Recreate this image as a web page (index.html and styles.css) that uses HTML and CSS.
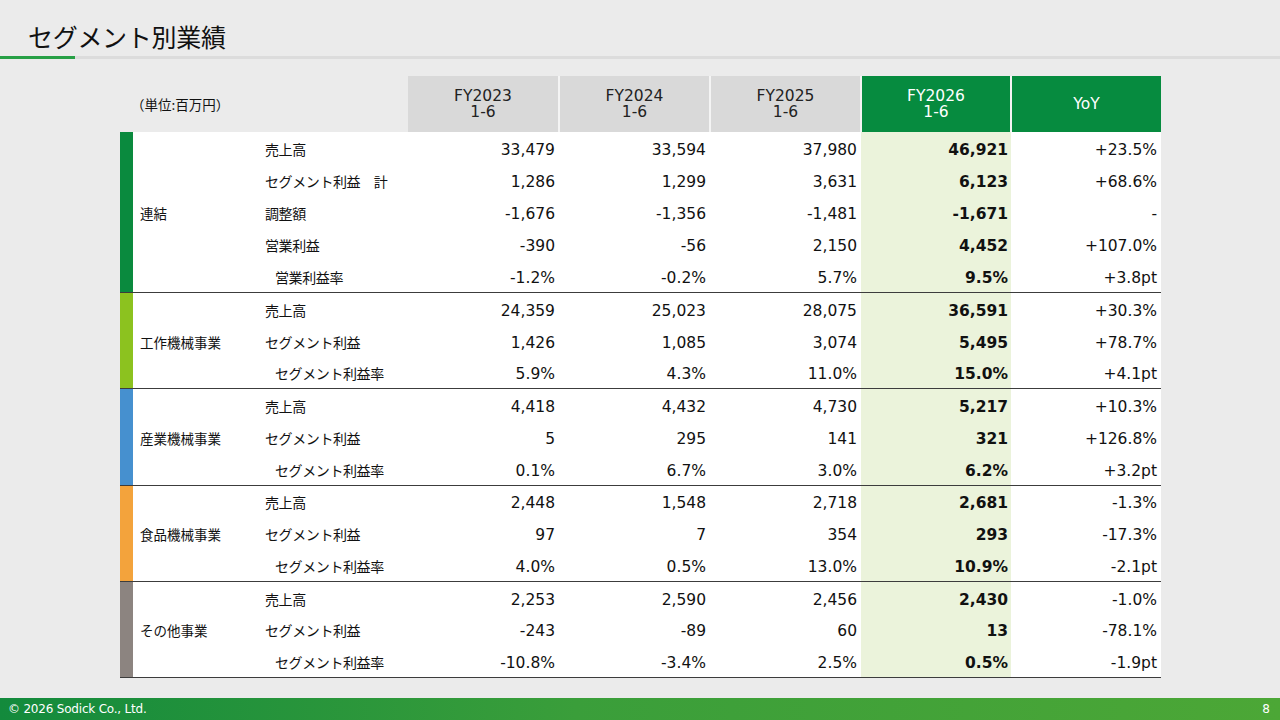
FILE: index.html
```html
<!DOCTYPE html>
<html lang="ja">
<head>
<meta charset="utf-8">
<title>セグメント別業績</title>
<link rel="stylesheet" href="styles.css">
</head>
<body>
<div class="slide">
  <header class="title-bar">
    <h1 class="title">セグメント別業績</h1>
    <div class="rule"><span class="rule-accent"></span></div>
  </header>

  <main class="content">
    <table class="seg">
      <colgroup>
        <col class="c-bar"><col class="c-group"><col class="c-item">
        <col class="c-num"><col class="c-num"><col class="c-num"><col class="c-cur"><col class="c-yoy">
      </colgroup>
      <thead>
        <tr>
          <th class="unit" colspan="3">（単位:百万円）</th>
          <th class="h-past">FY2023<br>1-6</th>
          <th class="h-past">FY2024<br>1-6</th>
          <th class="h-past">FY2025<br>1-6</th>
          <th class="h-cur">FY2026<br>1-6</th>
          <th class="h-cur">YoY</th>
        </tr>
      </thead>
      <tbody class="g g-consol">
        <tr><td class="bar" rowspan="5"></td><td class="grp" rowspan="5">連結</td><td class="item">売上高</td><td>33,479</td><td>33,594</td><td>37,980</td><td class="cur">46,921</td><td class="yoy">+23.5%</td></tr>
        <tr><td class="item">セグメント利益　計</td><td>1,286</td><td>1,299</td><td>3,631</td><td class="cur">6,123</td><td class="yoy">+68.6%</td></tr>
        <tr><td class="item">調整額</td><td>-1,676</td><td>-1,356</td><td>-1,481</td><td class="cur">-1,671</td><td class="yoy">-</td></tr>
        <tr><td class="item">営業利益</td><td>-390</td><td>-56</td><td>2,150</td><td class="cur">4,452</td><td class="yoy">+107.0%</td></tr>
        <tr class="last"><td class="item sub">営業利益率</td><td>-1.2%</td><td>-0.2%</td><td>5.7%</td><td class="cur">9.5%</td><td class="yoy">+3.8pt</td></tr>
      </tbody>
      <tbody class="g g-machine">
        <tr><td class="bar" rowspan="3"></td><td class="grp" rowspan="3">工作機械事業</td><td class="item">売上高</td><td>24,359</td><td>25,023</td><td>28,075</td><td class="cur">36,591</td><td class="yoy">+30.3%</td></tr>
        <tr><td class="item">セグメント利益</td><td>1,426</td><td>1,085</td><td>3,074</td><td class="cur">5,495</td><td class="yoy">+78.7%</td></tr>
        <tr class="last"><td class="item sub">セグメント利益率</td><td>5.9%</td><td>4.3%</td><td>11.0%</td><td class="cur">15.0%</td><td class="yoy">+4.1pt</td></tr>
      </tbody>
      <tbody class="g g-industrial">
        <tr><td class="bar" rowspan="3"></td><td class="grp" rowspan="3">産業機械事業</td><td class="item">売上高</td><td>4,418</td><td>4,432</td><td>4,730</td><td class="cur">5,217</td><td class="yoy">+10.3%</td></tr>
        <tr><td class="item">セグメント利益</td><td>5</td><td>295</td><td>141</td><td class="cur">321</td><td class="yoy">+126.8%</td></tr>
        <tr class="last"><td class="item sub">セグメント利益率</td><td>0.1%</td><td>6.7%</td><td>3.0%</td><td class="cur">6.2%</td><td class="yoy">+3.2pt</td></tr>
      </tbody>
      <tbody class="g g-food">
        <tr><td class="bar" rowspan="3"></td><td class="grp" rowspan="3">食品機械事業</td><td class="item">売上高</td><td>2,448</td><td>1,548</td><td>2,718</td><td class="cur">2,681</td><td class="yoy">-1.3%</td></tr>
        <tr><td class="item">セグメント利益</td><td>97</td><td>7</td><td>354</td><td class="cur">293</td><td class="yoy">-17.3%</td></tr>
        <tr class="last"><td class="item sub">セグメント利益率</td><td>4.0%</td><td>0.5%</td><td>13.0%</td><td class="cur">10.9%</td><td class="yoy">-2.1pt</td></tr>
      </tbody>
      <tbody class="g g-other">
        <tr><td class="bar" rowspan="3"></td><td class="grp" rowspan="3">その他事業</td><td class="item">売上高</td><td>2,253</td><td>2,590</td><td>2,456</td><td class="cur">2,430</td><td class="yoy">-1.0%</td></tr>
        <tr><td class="item">セグメント利益</td><td>-243</td><td>-89</td><td>60</td><td class="cur">13</td><td class="yoy">-78.1%</td></tr>
        <tr class="last"><td class="item sub">セグメント利益率</td><td>-10.8%</td><td>-3.4%</td><td>2.5%</td><td class="cur">0.5%</td><td class="yoy">-1.9pt</td></tr>
      </tbody>
    </table>
  </main>

  <footer class="footer">
    <span class="copy">© 2026 Sodick Co., Ltd.</span>
    <span class="page">8</span>
  </footer>
</div>
</body>
</html>
```

FILE: styles.css
```css
* { box-sizing: border-box; }

html, body {
  margin: 0;
  padding: 0;
}

body {
  background: #ebebeb;
  font-family: "Noto Sans CJK JP", "Noto Sans", sans-serif;
  color: #111;
}

.slide {
  width: 1280px;
  height: 720px;
  display: flex;
  flex-direction: column;
  overflow: hidden;
}

/* ---------- title ---------- */
.title-bar {
  padding-top: 18px;
  height: 76px;
}

.title {
  margin: 0 0 0 28px;
  font-size: 25px;
  font-weight: 400;
  line-height: 36px;
  letter-spacing: -0.3px;
  color: #111;
}

.rule {
  margin-top: 2px;
  height: 3px;
  background: #dcdcdc;
  display: flex;
}

.rule-accent {
  width: 75px;
  height: 3px;
  background: #27a046;
}

/* ---------- table ---------- */
.content {
  flex: 1;
  padding-left: 120px;
}

.seg {
  width: 1040px;
  table-layout: fixed;
  border-collapse: collapse;
  font-family: "DejaVu Sans", "Noto Sans CJK JP", sans-serif;
  font-size: 15.5px;
}

.c-bar { width: 13px; }
.c-group { width: 122px; }
.c-item { width: 153px; }
.c-num { width: 151px; }
.c-cur { width: 150px; }
.c-yoy { width: 150px; }

thead th {
  height: 56px;
  font-weight: 400;
  font-size: 15.5px;
  line-height: 16px;
  text-align: center;
  padding: 0;
  border-left: 2px solid #f4f4f4;
}

thead th.unit {
  border-left: none;
  text-align: left;
  padding-left: 11px;
  font-family: "Noto Sans CJK JP", sans-serif;
  font-size: 13.5px;
  background: #ebebeb;
}

thead th.h-past {
  background: #d9d9d9;
  color: #222;
}

thead th.unit + th { border-left: none; }

thead th.h-cur {
  background: #068b3f;
  color: #fff;
}

tbody td {
  height: 32.1px;
  padding: 4px 4px 0 0;
  text-align: right;
  background: #fff;
  white-space: nowrap;
  line-height: 16px;
}

tbody td.cur {
  background: #ebf3db;
  font-weight: 700;
  padding-right: 3px;
}

tbody tr.last td { border-bottom: 1.5px solid #3c3c3c; }
tbody td.bar, tbody td.grp { border-bottom: 1.5px solid #3c3c3c; }

td.bar { padding: 0; }

td.grp {
  text-align: left;
  padding: 2px 0 0 7px;
  font-family: "Noto Sans CJK JP", sans-serif;
  font-size: 13.5px;
}

td.item {
  text-align: left;
  padding: 2px 0 0 10px;
  font-family: "Noto Sans CJK JP", sans-serif;
  font-size: 14px;
  letter-spacing: -0.4px;
}

td.item.sub { padding-left: 20px; }

.g-consol td.bar { background: #0a8a3e; }
.g-machine td.bar { background: #8cc21f; }
.g-industrial td.bar { background: #4690cf; }
.g-food td.bar { background: #f3a33c; }
.g-other td.bar { background: #8c8480; }

/* ---------- footer ---------- */
.footer {
  height: 22px;
  background: linear-gradient(90deg, #138a3c 0%, #3a9e3a 45%, #4ca736 100%);
  color: #fff;
  display: flex;
  align-items: center;
  justify-content: space-between;
  padding: 0 10px 0 8px;
  font-family: "DejaVu Sans", sans-serif;
  font-size: 12px;
}

.copy { letter-spacing: -0.2px; }
.page { font-size: 12px; }
```
